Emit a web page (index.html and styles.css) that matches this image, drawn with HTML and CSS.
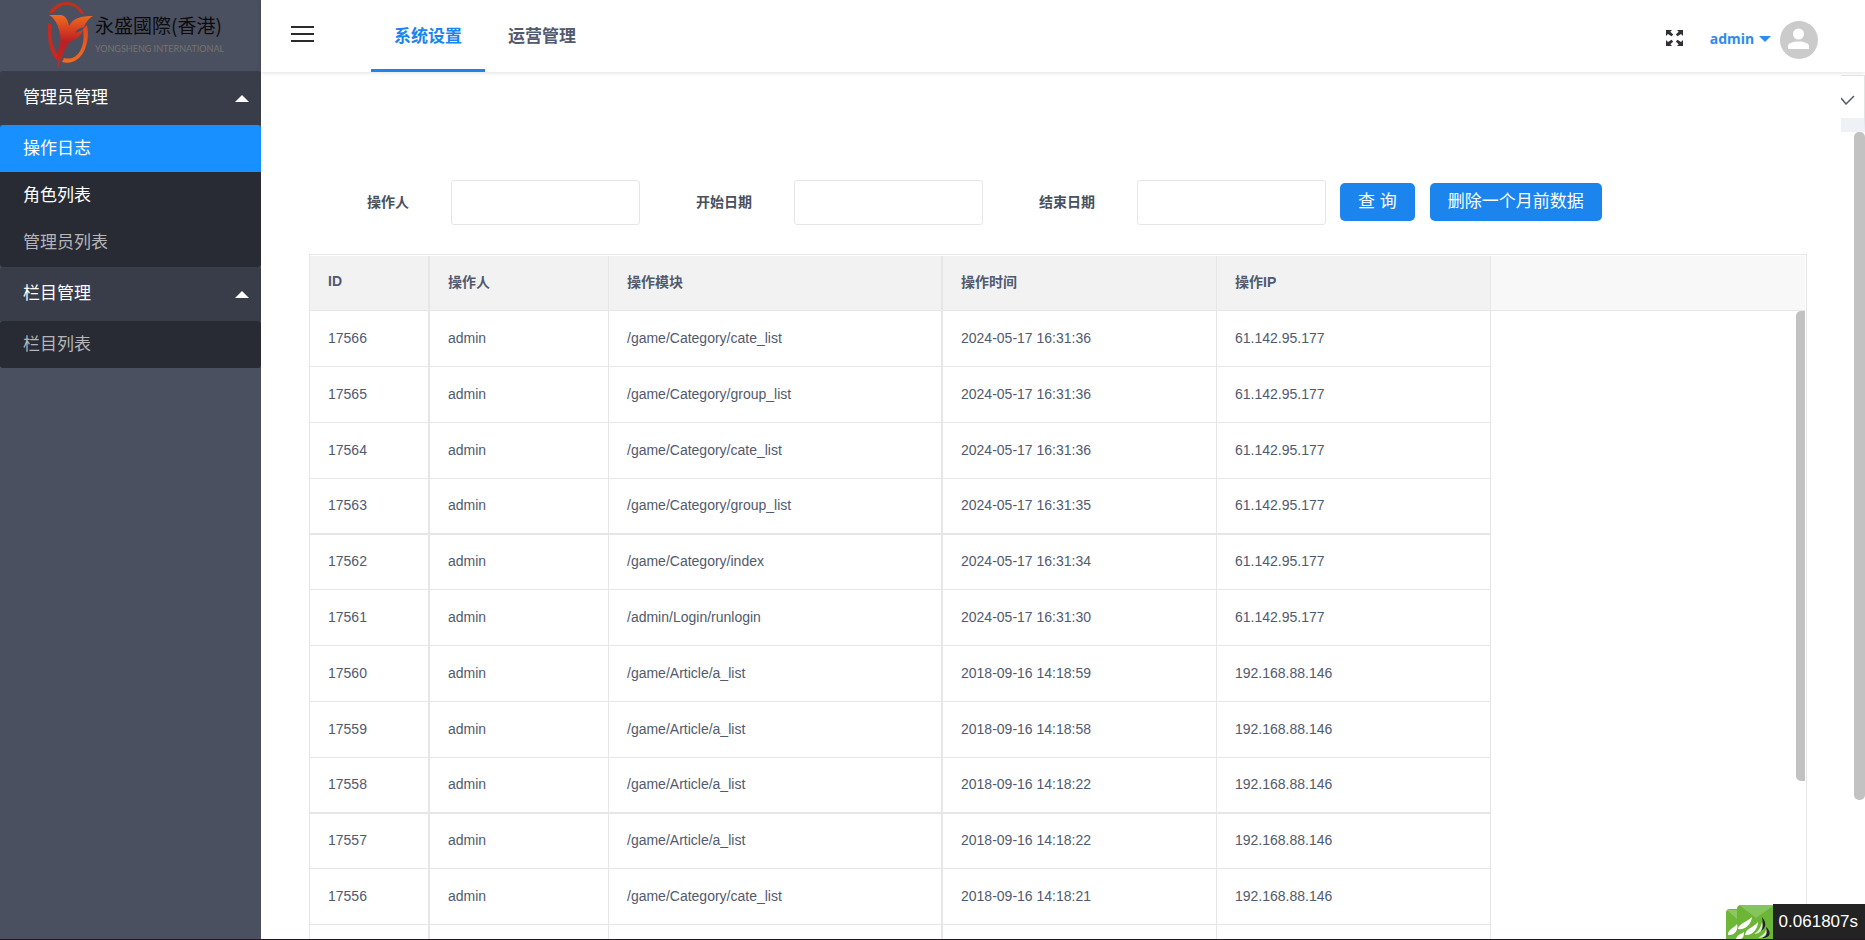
FILE: index.html
```
<!DOCTYPE html>
<html lang="zh-CN">
<head>
<meta charset="utf-8">
<title>操作日志</title>
<link rel="stylesheet" href="styles.css">
</head>
<body>
<div class="app">
  <aside class="sidebar">
    <div class="brand">
      <svg class="brand-mark" viewBox="0 0 46 69" aria-hidden="true">
        <defs>
          <linearGradient id="ring" x1="0" y1="0" x2="0" y2="1"><stop offset="0" stop-color="#e0481f"/><stop offset="1" stop-color="#f8691d"/></linearGradient>
          <linearGradient id="leaf" x1="0" y1="0" x2="0" y2="1"><stop offset="0" stop-color="#f26a20"/><stop offset=".5" stop-color="#bd1f22"/><stop offset="1" stop-color="#c42a22"/></linearGradient>
        </defs>
        <path d="M1 13C5 5 12 2 19 2C27 2 33 7 36 14L33 14C29 8 25 5 19 5C14 5 9 8 5 13Z" fill="#c0301f"/>
        <path d="M0 23C-1 38 1 53 9 60L10 55C4 47 3 35 4 25Z" fill="#c42b20"/>
        <path d="M39 25C43 45 33 67 14 62L16 58C30 62 38 46 35 29Z" fill="url(#ring)"/>
        <path d="M1 15H13C18 16 20 20 21 26C25 18 33 16 45 16C41 18 38 22 36 27C31 28 28 30 27 33L35 30C34 35 29 39 23 41C18 44 15 54 10 68C9 62 9 52 12 44C14 36 10 20 1 15Z" fill="url(#leaf)"/>
      </svg>
      <div class="brand-text">
        <span class="brand-cn">永盛國際(香港)</span>
        <span class="brand-en">YONGSHENG INTERNATIONAL</span>
      </div>
    </div>
    <nav class="menu">
      <button class="menu-title" type="button">管理员管理<i class="arrow-up"></i></button>
      <div class="submenu">
        <a class="item active" href="#">操作日志</a>
        <a class="item hover" href="#">角色列表</a>
        <a class="item" href="#">管理员列表</a>
      </div>
      <button class="menu-title" type="button">栏目管理<i class="arrow-up"></i></button>
      <div class="submenu">
        <a class="item" href="#">栏目列表</a>
      </div>
    </nav>
  </aside>
  <div class="content">
    <header class="topbar">
      <button class="burger" type="button" aria-label="菜单"><span></span><span></span><span></span></button>
      <nav class="tabs">
        <a class="tab current" href="#">系统设置</a>
        <a class="tab" href="#">运营管理</a>
      </nav>
      <div class="tools">
        <button class="expand" type="button" aria-label="全屏">
          <svg viewBox="0 0 17 16" aria-hidden="true"><g fill="#2f3135"><path id="c" d="M0 0H6L4.300 1.700L7.200 4.600L5.500 6.300L2 3.900L0 6Z"/><use href="#c" transform="translate(17 0) scale(-1 1)"/><use href="#c" transform="translate(0 16) scale(1 -1)"/><use href="#c" transform="translate(17 16) scale(-1 -1)"/></g></svg>
        </button>
        <button class="user" type="button">admin<i class="arrow-down"></i></button>
        <svg class="avatar" viewBox="0 0 38 38" aria-hidden="true"><circle cx="19" cy="19" r="19" fill="#cbcbcb"/><circle cx="18.500" cy="13" r="5.500" fill="#fff"/><path d="M8 28V25C8 19 29 19 29 25V28Z" fill="#fff"/></svg>
      </div>
    </header>
    <main class="page">
      <form class="search">
        <div class="field"><label for="operator">操作人</label><input id="operator" type="text"></div>
        <div class="field"><label for="start">开始日期</label><input id="start" type="text"></div>
        <div class="field"><label for="end">结束日期</label><input id="end" type="text"></div>
        <div class="actions">
          <button class="btn" type="button">查 询</button>
          <button class="btn" type="button">删除一个月前数据</button>
        </div>
      </form>
      <section class="grid">
        <table class="log">
          <colgroup><col class="c-id"><col class="c-user"><col class="c-mod"><col class="c-time"><col class="c-ip"><col></colgroup>
          <thead><tr><th>ID</th><th>操作人</th><th>操作模块</th><th>操作时间</th><th>操作IP</th><th class="rest"></th></tr></thead>
          <tbody>
            <tr><td>17566</td><td>admin</td><td>/game/Category/cate_list</td><td>2024-05-17 16:31:36</td><td>61.142.95.177</td><td class="rest"></td></tr>
            <tr><td>17565</td><td>admin</td><td>/game/Category/group_list</td><td>2024-05-17 16:31:36</td><td>61.142.95.177</td><td class="rest"></td></tr>
            <tr><td>17564</td><td>admin</td><td>/game/Category/cate_list</td><td>2024-05-17 16:31:36</td><td>61.142.95.177</td><td class="rest"></td></tr>
            <tr><td>17563</td><td>admin</td><td>/game/Category/group_list</td><td>2024-05-17 16:31:35</td><td>61.142.95.177</td><td class="rest"></td></tr>
            <tr><td>17562</td><td>admin</td><td>/game/Category/index</td><td>2024-05-17 16:31:34</td><td>61.142.95.177</td><td class="rest"></td></tr>
            <tr><td>17561</td><td>admin</td><td>/admin/Login/runlogin</td><td>2024-05-17 16:31:30</td><td>61.142.95.177</td><td class="rest"></td></tr>
            <tr><td>17560</td><td>admin</td><td>/game/Article/a_list</td><td>2018-09-16 14:18:59</td><td>192.168.88.146</td><td class="rest"></td></tr>
            <tr><td>17559</td><td>admin</td><td>/game/Article/a_list</td><td>2018-09-16 14:18:58</td><td>192.168.88.146</td><td class="rest"></td></tr>
            <tr><td>17558</td><td>admin</td><td>/game/Article/a_list</td><td>2018-09-16 14:18:22</td><td>192.168.88.146</td><td class="rest"></td></tr>
            <tr><td>17557</td><td>admin</td><td>/game/Article/a_list</td><td>2018-09-16 14:18:22</td><td>192.168.88.146</td><td class="rest"></td></tr>
            <tr><td>17556</td><td>admin</td><td>/game/Category/cate_list</td><td>2018-09-16 14:18:21</td><td>192.168.88.146</td><td class="rest"></td></tr>
            <tr><td></td><td></td><td></td><td></td><td></td><td class="rest"></td></tr>
          </tbody>
        </table>
        <div class="thumb inner"></div>
      </section>
    </main>
    <div class="tab-control"><svg viewBox="0 0 14 10" aria-hidden="true"><path d="M0 3L5 9L13 1" fill="none" stroke="#555c6c" stroke-width="1.500"/></svg></div>
    <div class="thumb outer"></div>
  </div>
  <div class="trace">
    <svg class="trace-logo" viewBox="0 0 47 35" aria-hidden="true">
      <rect y="5" width="24" height="34" rx="4" fill="#6fb737"/><path d="M1 6H11V15Z" fill="#8cc861"/>
      <rect x="11" y="1" width="44" height="40" rx="4" fill="#6db536"/><path d="M13 1H47V2L30 14Z" fill="#86c45c"/>
      <g fill="#fff"><path d="M2 31C2 25 7 25 11 20C13 26 8 32 2 31Z"/><path d="M12 25C13 19 20 19 26 13C25 21 19 26 12 25Z"/><path d="M19 31C20 24 27 24 32 18C32 25 26 32 19 31Z"/><path d="M10 35C11 31 15 30 18 28C18 32 17 34 15 35Z"/></g>
      <path d="M36 13C41 19 40 24 35 27C37 22 37 18 36 13ZM40 23C45 27 46 34 36 34C41 31 41 27 40 23Z" fill="#222"/>
      <path d="M28 30C33 27 35 22 36 18C38 24 35 30 28 30ZM32 34C37 31 40 28 40 25C42 30 40 34 32 34Z" fill="#fff" opacity=".75"/>
    </svg>
    <span class="trace-time">0.061807s</span>
  </div>
</div>
</body>
</html>
```
FILE: styles.css
```
* { box-sizing: border-box; }
body {
  margin: 0;
  font-family: "Liberation Sans", "Noto Sans CJK SC", sans-serif;
  font-size: 14px;
  color: #515a6e;
  background: #fff;
}
button { margin: 0; padding: 0; border: 0; background: none; font: inherit; color: inherit; }
a { color: inherit; text-decoration: none; }
.app { position: relative; display: flex; height: 100vh; overflow: hidden; border-bottom: 1px solid #231822; }

.sidebar { flex: 0 0 261px; background: #4a5060; }
.brand { display: flex; align-items: flex-start; gap: 1px; height: 71px; padding-left: 48px; }
.brand-mark { width: 46px; height: 69px; }
.brand-text { display: flex; flex-direction: column; padding-top: 9px; white-space: nowrap; }
.brand-cn { font-family: "Noto Sans CJK TC", sans-serif; font-size: 19px; line-height: 32px; color: #0c0c0e; }
.brand-en { font-family: Lato, sans-serif; font-size: 9px; line-height: 16px; color: #77746f; }
.menu-title {
  display: flex; align-items: center; justify-content: space-between;
  width: 100%; height: 54px; padding: 0 12px 6px 23px;
  background: #393d49; color: #fff; font-size: 17px; border-radius: 3px 3px 0 0;
}
.arrow-up { margin-top: 6px; border: 7px solid transparent; border-top: 0; border-bottom-color: #fff; }
.submenu { background: #282b33; border-radius: 3px; overflow: hidden; }
.item { display: block; height: 47px; padding-left: 23px; font-size: 17px; line-height: 48px; color: #b4b5b8; }
.item:nth-child(3) { height: 48px; }
.item.hover { color: #fff; }
.item.active { background: #1890ff; color: #fff; }

.content { position: relative; flex: 1; min-width: 0; display: flex; flex-direction: column; }
.topbar { display: flex; flex: 0 0 71px; padding: 0 47px 0 30px; box-shadow: 0 1px 4px rgba(0, 0, 0, .12); }
.burger { display: flex; flex-direction: column; gap: 5px; width: 23px; margin-top: 26px; }
.burger span { width: 100%; height: 2px; background: #2b2b2b; }
.tabs { display: flex; height: 72px; margin-left: 35px; padding: 0 22px; background: #fff; }
.tab { padding: 0 23px; width: 114px; height: 72px; font-size: 17px; font-weight: bold; line-height: 74px; white-space: nowrap; color: #515a6e; }
.current { color: #1b84ed; border-bottom: 3px solid #1b84ed; }
.tools { display: flex; align-items: center; margin-left: auto; padding-top: 8px; }
.expand { width: 17px; height: 16px; margin: 0 27px 4px 0; }
.expand svg { display: block; }
.user { display: flex; align-items: center; gap: 5px; padding-bottom: 3px; font-family: "Noto Sans", sans-serif; font-size: 14px; font-weight: bold; color: #2d8cf0; }
.arrow-down { border: 6px solid transparent; border-bottom: 0; border-top-color: #2d8cf0; }
.avatar { width: 38px; height: 38px; margin-left: 9px; }

.page { flex: 1; min-height: 0; display: flex; flex-direction: column; padding: 108px 58px 0 48px; }
.search { display: flex; height: 45px; }
.field { display: flex; align-items: center; width: 343px; }
.field label { width: 142px; padding: 0 42px 4px 0; text-align: right; font-weight: bold; white-space: nowrap; color: #495060; }
.field input { width: 189px; height: 45px; border: 1px solid #e6e6e6; border-radius: 3px; background: #fff; }
.actions { display: flex; align-items: center; gap: 15px; padding: 0 0 2px 2px; }
.btn { height: 38px; padding: 0 18px 4px; border-radius: 5px; background: #1b84ed; color: #fff; font-size: 17px; white-space: nowrap; }

.grid { position: relative; flex: 1; min-height: 0; margin-top: 29px; padding: 1px 1px 0 0; border: 1px solid #e6e6e6; border-bottom: 0; overflow: hidden; }
.log { width: 100%; table-layout: fixed; border-collapse: separate; border-spacing: 0; }
.c-id { width: 120px; }
.c-user { width: 179px; }
.c-mod { width: 334px; }
.c-time { width: 274px; }
.c-ip { width: 274px; }
.log th, .log td { height: 56px; padding: 0 18px 2px; border: 0 solid #e6e6e6; border-width: 0 1px 1px 0; text-align: left; white-space: nowrap; }
.log th { height: 55px; padding-bottom: 4px; background: #f2f2f2; }
.log th.rest { background: #f8f8f8; border-right: 0; }
.log td.rest { border: 0; }
.log tr :nth-child(1), .log tr :nth-child(3) { border-right-width: 2px; }
.log tbody tr:nth-child(5n) td { height: 55px; }
.log tbody tr:nth-child(5n+4) td:not(.rest) { border-bottom-width: 2px; }

.thumb { position: absolute; background: #c2c2c2; }
.inner { top: 56px; right: 1px; width: 9px; height: 470px; border-radius: 5px 0 0 5px; }
.outer { top: 132px; right: 0; width: 11px; height: 668px; border-radius: 5px; }
.tab-control {
  position: absolute; top: 75px; right: 0; width: 24px; height: 57px;
  background: #fff; border: solid #e2e2e4; border-width: 1px 1px 14px 0; border-bottom-color: #eef1f6;
}
.tab-control svg { display: block; width: 14px; height: 10px; margin-top: 19px; }

.trace { position: absolute; right: 0; bottom: 0; display: flex; align-items: flex-end; }
.trace-logo { width: 47px; height: 35px; }
.trace-time { height: 35px; padding: 0 7px 0 6px; background: #232323; color: #fff; font-size: 17px; line-height: 35px; }
```
